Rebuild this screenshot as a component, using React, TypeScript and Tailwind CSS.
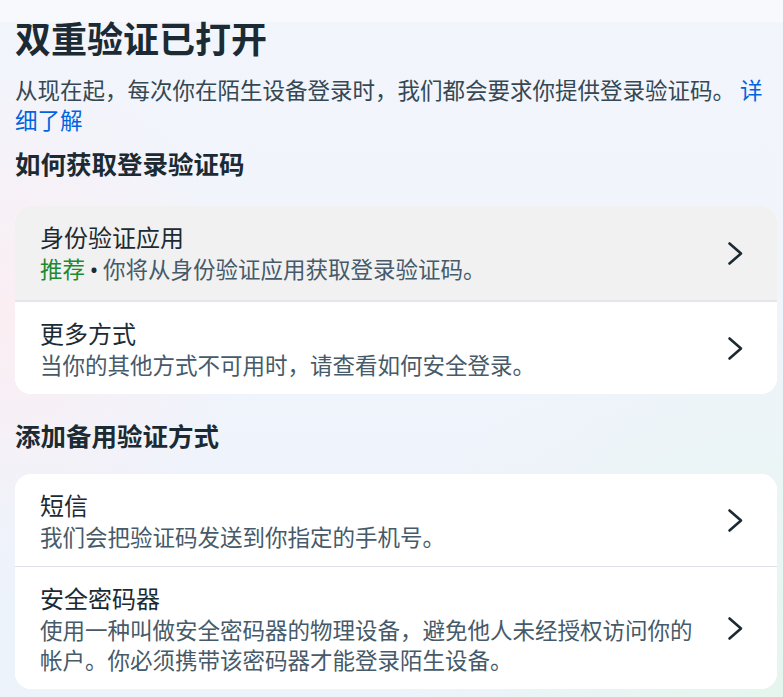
import type { ReactNode } from 'react'

type Row = {
  title: string
  desc: ReactNode
  active?: boolean
}

const font = { fontFamily: '"Noto Sans CJK SC", "Noto Sans", sans-serif' }

function Chevron() {
  return (
    <svg width="17" height="25" viewBox="0 0 17 25" fill="none" aria-hidden className="shrink-0">
      <path d="M2.5 2.5 L14 12.5 L2.5 22.5" stroke="#1c2b33" strokeWidth="2.6" strokeLinecap="round" strokeLinejoin="round" />
    </svg>
  )
}

function OptionCard({ rows }: { rows: Row[] }) {
  return (
    <div className="rounded-2xl bg-white overflow-hidden">
      {rows.map((row, i) => (
        <div
          key={row.title}
          className={`flex items-center pl-[25px] pr-[33px] py-[15px] ${
            row.active ? 'bg-[#f1f1f2]' : 'bg-white'
          } ${i > 0 ? (rows[i - 1].active ? 'border-t-2 border-[#e3e6ea]' : 'border-t border-[#dfe3e7]') : ''}`}
        >
          <div className="flex-1 min-w-0 pr-6">
            <div className="text-[24px] leading-[32px] text-[#1c2b33]">{row.title}</div>
            <div className="text-[22.5px] leading-[30px] text-[#465a69]">{row.desc}</div>
          </div>
          <Chevron />
        </div>
      ))}
    </div>
  )
}

export default function App() {
  return (
    <div
      style={font}
      className="min-h-screen w-full bg-[radial-gradient(circle_at_0%_45%,#fbeef3_0%,transparent_28%),radial-gradient(circle_at_100%_100%,#e5f6ee_0%,transparent_38%),linear-gradient(180deg,#f3f5fb_0%,#edf3fb_100%)]"
    >
      {/* faded sticky header strip */}
      <div className="h-[22px] bg-white/40" />

      <div className="pl-[15px] pr-[6px] pb-3">
        <h1 className="-mt-[7px] text-[36px] leading-[44px] font-bold text-[#1c2b33]">
          双重验证已打开
        </h1>
        <p className="mt-[15px] pr-[9px] text-[22.5px] leading-[30px] text-[#344854]">
          从现在起，每次你在陌生设备登录时，我们都会要求你提供登录验证码。{' '}
          <span className="text-[#0064e0]">详细了解</span>
        </p>

        <h2 className="mt-[12px] text-[25.5px] leading-[34px] font-bold text-[#1c2b33]">
          如何获取登录验证码
        </h2>
        <div className="mt-[26px]">
          <OptionCard
            rows={[
              {
                title: '身份验证应用',
                active: true,
                desc: (
                  <>
                    <span className="text-[#1c8a2e]">推荐</span>
                    <span
                      className="inline-block w-[18px] text-center text-[#1c2b33]"
                      style={{ fontFamily: '"Noto Sans", sans-serif' }}
                    >
                      •
                    </span>
                    你将从身份验证应用获取登录验证码。
                  </>
                ),
              },
              { title: '更多方式', desc: '当你的其他方式不可用时，请查看如何安全登录。' },
            ]}
          />
        </div>

        <h2 className="mt-[24px] text-[25.5px] leading-[34px] font-bold text-[#1c2b33]">
          添加备用验证方式
        </h2>
        <div className="mt-[22px]">
          <OptionCard
            rows={[
              { title: '短信', desc: '我们会把验证码发送到你指定的手机号。' },
              {
                title: '安全密码器',
                desc: '使用一种叫做安全密码器的物理设备，避免他人未经授权访问你的帐户。你必须携带该密码器才能登录陌生设备。',
              },
            ]}
          />
        </div>
      </div>
    </div>
  )
}
